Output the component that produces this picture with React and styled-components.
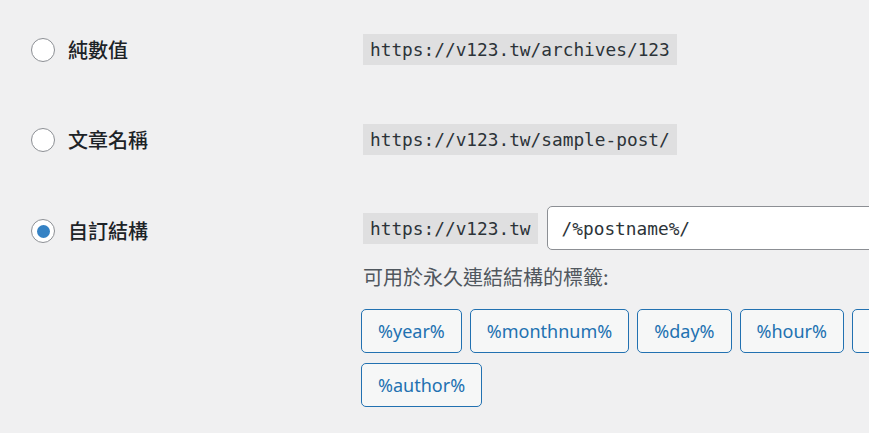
import React from "react";
import styled, { createGlobalStyle } from "styled-components";

const GlobalStyle = createGlobalStyle`
  html, body {
    margin: 0;
    padding: 0;
    overflow: hidden;
    background: #f0f0f1;
  }
`;

const Page = styled.div`
  width: 1400px;
  padding: 16px 0 0 31px;
  font-family: "Noto Sans CJK TC", "Noto Sans", sans-serif;
  color: #1d2327;
`;

const Row = styled.div`
  display: grid;
  grid-template-columns: 332px 1fr;
  align-items: start;
  min-height: 90px;
  padding-top: ${(p) => p.$pt}px;
  box-sizing: border-box;
`;

const LabelCell = styled.label`
  display: flex;
  align-items: center;
  gap: 13px;
  height: ${(p) => p.$line}px;
  font-size: 20px;
  font-weight: 500;
  line-height: 24px;
  color: #1d2327;
`;

const Radio = styled.span`
  width: 24px;
  height: 24px;
  box-sizing: border-box;
  border-radius: 50%;
  border: 1px solid #8c8f94;
  background: #fff;
  display: flex;
  align-items: center;
  justify-content: center;
  flex-shrink: 0;

  &::after {
    content: "";
    width: 13px;
    height: 13px;
    border-radius: 50%;
    background: #3582c4;
    display: ${(p) => (p.$checked ? "block" : "none")};
  }
`;

const Content = styled.div`
  display: flex;
  flex-direction: column;
`;

const Line = styled.div`
  display: flex;
  align-items: center;
  gap: 9px;
`;

const Code = styled.code`
  display: inline-block;
  background: rgba(0, 0, 0, 0.07);
  font-family: "DejaVu Sans Mono", "Liberation Mono", monospace;
  font-size: 17.8px;
  line-height: 31px;
  height: 31px;
  padding: 0 7px;
  color: #2c3338;
  white-space: nowrap;
`;

const Input = styled.input`
  width: 520px;
  height: 44px;
  box-sizing: border-box;
  border: 1px solid #8c8f94;
  border-radius: 5px;
  background: #fff;
  padding: 0 14px;
  font-family: "DejaVu Sans Mono", "Liberation Mono", monospace;
  font-size: 17.8px;
  color: #2c3338;
  outline: none;
`;

const Description = styled.p`
  margin: 13px 0 0;
  font-size: 20px;
  line-height: 28px;
  color: #50575e;
`;

const Tags = styled.div`
  display: flex;
  flex-wrap: wrap;
  gap: 10px 8px;
  width: 1240px;
  margin: 18px 0 0 -2px;
`;

const TagButton = styled.button`
  height: 44px;
  padding: 0 16px;
  border: 1px solid #2271b1;
  border-radius: 5px;
  background: #f6f7f7;
  color: #2271b1;
  font-family: "Noto Sans", "Liberation Sans", sans-serif;
  font-size: 18px;
  cursor: pointer;
`;

const tags = [
  "%year%",
  "%monthnum%",
  "%day%",
  "%hour%",
  "%minute%",
  "%second%",
  "%post_id%",
  "%postname%",
  "%category%",
  "%author%",
];

export default function App() {
  return (
    <>
      <GlobalStyle />
      <Page>
        <Row $pt={18}>
          <LabelCell $line={31}>
            <Radio />
            純數值
          </LabelCell>
          <Content>
            <Line>
              <Code>https://v123.tw/archives/123</Code>
            </Line>
          </Content>
        </Row>

        <Row $pt={18}>
          <LabelCell $line={31}>
            <Radio />
            文章名稱
          </LabelCell>
          <Content>
            <Line>
              <Code>https://v123.tw/sample-post/</Code>
            </Line>
          </Content>
        </Row>

        <Row $pt={10}>
          <LabelCell $line={50}>
            <Radio $checked />
            自訂結構
          </LabelCell>
          <Content>
            <Line>
              <Code>https://v123.tw</Code>
              <Input defaultValue="/%postname%/" />
            </Line>
            <Description>可用於永久連結結構的標籤:</Description>
            <Tags>
              {tags.map((t) => (
                <TagButton key={t}>{t}</TagButton>
              ))}
            </Tags>
          </Content>
        </Row>
      </Page>
    </>
  );
}
